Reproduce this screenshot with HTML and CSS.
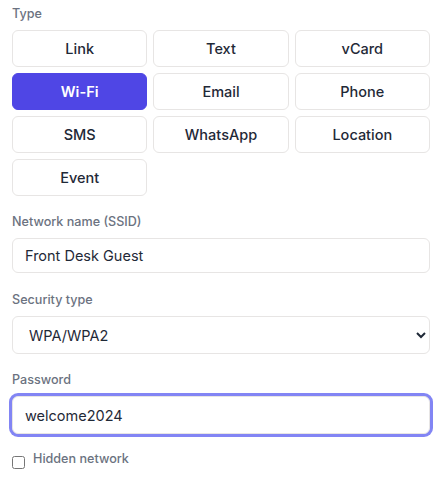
FILE: index.html
```html
<!DOCTYPE html>
<html lang="en">
<head>
<meta charset="utf-8">
<title>QR type – Wi-Fi</title>
<link rel="stylesheet" href="styles.css">
</head>
<body>
  <form class="form">
    <div class="field-label">Type</div>
    <div class="type-grid">
      <button type="button" class="type-btn">Link</button>
      <button type="button" class="type-btn">Text</button>
      <button type="button" class="type-btn">vCard</button>
      <button type="button" class="type-btn is-active">Wi-Fi</button>
      <button type="button" class="type-btn">Email</button>
      <button type="button" class="type-btn">Phone</button>
      <button type="button" class="type-btn">SMS</button>
      <button type="button" class="type-btn">WhatsApp</button>
      <button type="button" class="type-btn">Location</button>
      <button type="button" class="type-btn">Event</button>
    </div>

    <div class="field field-ssid">
      <label class="field-label" for="ssid">Network name (SSID)</label>
      <input id="ssid" class="control control-text" type="text" value="Front Desk Guest">
    </div>

    <div class="field field-security">
      <label class="field-label" for="sec">Security type</label>
      <select id="sec" class="control control-select">
        <option selected>WPA/WPA2</option>
        <option>WEP</option>
        <option>None</option>
      </select>
    </div>

    <div class="field field-password">
      <label class="field-label" for="pw">Password</label>
      <input id="pw" class="control control-text control-focus" type="text" value="welcome2024">
    </div>

    <label class="check-row">
      <input type="checkbox" class="check">
      <span class="check-label">Hidden network</span>
    </label>
  </form>
</body>
</html>
```

FILE: styles.css
```css
* {
  box-sizing: border-box;
}

html, body {
  margin: 0;
  background: #ffffff;
}

body {
  font-family: Inter, "Noto Sans", "Liberation Sans", sans-serif;
  color: #1f2937;
  padding: 6px 12px;
}

.form {
  display: flex;
  flex-direction: column;
}

.field-label {
  display: block;
  font-size: 12.6px;
  line-height: 16px;
  font-weight: 500;
  color: #6b7280;
  margin-bottom: 8px;
}

.type-grid {
  display: grid;
  grid-template-columns: repeat(3, 1fr);
  grid-auto-rows: 37px;
  gap: 6px;
}

.type-btn {
  font-family: inherit;
  font-size: 14.5px;
  font-weight: 500;
  color: #1f2937;
  background: #ffffff;
  border: 1px solid #e7e5e4;
  border-radius: 6px;
  padding: 0;
  margin: 0;
}

.type-btn.is-active {
  background: #4f46e5;
  border-color: #4f46e5;
  color: #ffffff;
  font-weight: 600;
}

.field {
  display: flex;
  flex-direction: column;
  margin-top: 18px;
}

.field-security {
  margin-top: 19px;
}

.control {
  font-family: inherit;
  font-size: 14.5px;
  color: #1f2937;
  background: #ffffff;
  border: 1px solid #e7e5e4;
  border-radius: 6px;
  margin: 0;
  width: 100%;
}

.control-text {
  height: 35px;
  padding: 0 12px;
}

.field-password .control-text {
  height: 38px;
}

.control-select {
  height: 38px;
  padding: 0 12px;
}

.control-focus {
  outline: none;
  box-shadow: 0 0 0 3px rgba(99, 102, 241, 0.8);
}

.check-row {
  display: flex;
  align-items: flex-start;
  gap: 8px;
  margin-top: 17px;
}

.check {
  width: 13px;
  height: 13px;
  margin: 5px 0 0 0;
}

.check-label {
  font-size: 12.6px;
  line-height: 16px;
  font-weight: 500;
  color: #6b7280;
}
```
